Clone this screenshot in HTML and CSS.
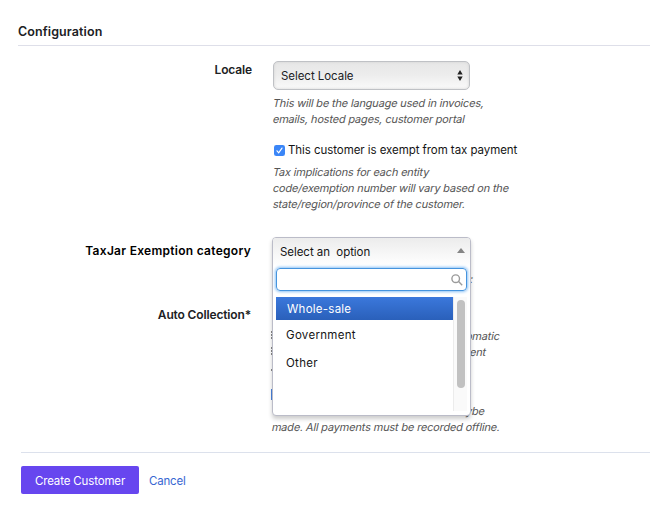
FILE: index.html
```html
<!DOCTYPE html>
<html lang="en">
<head>
<meta charset="utf-8">
<title>Configuration</title>
<link rel="stylesheet" href="styles.css">
</head>
<body>
<form class="config">
  <h2 class="heading">Configuration</h2>
  <div class="row row-locale">
    <label class="label">Locale</label>
    <div class="field">
      <div class="select"><span>Select Locale</span>
        <svg class="sort" viewBox="0 0 6 11"><path d="M3 0L5.7 4.5H.3zM3 11L.3 6.5H5.7z"/></svg>
      </div>
      <p class="hint hint-locale"><span>This will be the language used in invoices,</span><span>emails, hosted pages, customer portal</span></p>
    </div>
  </div>
  <div class="row row-exempt">
    <span class="label"></span>
    <div class="field">
      <div class="check">
        <svg class="tick" viewBox="0 0 11 11"><rect width="11" height="11" rx="2.3" fill="#3b86f7"/><path d="M3 5.8L4.7 7.8L8 3.1" fill="none" stroke="#fff" stroke-width="1.2" stroke-linecap="round"/></svg>
        <span>This customer is exempt from tax payment</span>
      </div>
      <p class="hint hint-exempt"><span>Tax implications for each entity</span><span>code/exemption number will vary based on the</span><span>state/region/province of the customer.</span></p>
    </div>
  </div>
  <div class="row row-category">
    <label class="label label-category">TaxJar Exemption category</label>
    <div class="field">
      <p class="hint peek-category"><span>:</span></p>
      <div class="dropdown">
        <div class="chosen"><span>Select an&nbsp; option</span><svg class="up" viewBox="0 0 8 5"><path d="M4 0L8 5H0z"/></svg></div>
        <div class="search"><svg class="glass" viewBox="0 0 12 12"><circle cx="4.7" cy="4.7" r="3.8"/><path d="M7.6 7.6L11.2 11.2"/></svg></div>
        <div class="list">
          <ul class="options">
            <li class="option active">Whole-sale</li>
            <li class="option">Government</li>
            <li class="option">Other</li>
          </ul>
          <div class="track"><div class="thumb"></div></div>
        </div>
      </div>
    </div>
  </div>
  <div class="row row-collection">
    <label class="label label-collection">Auto Collection*</label>
    <div class="field">
      <div class="edge"><i class="mark"></i><i class="mark"></i><i class="mark dot"></i><i class="mark radio"></i></div>
      <p class="hint peek peek-one"><span>omatic</span></p>
      <p class="hint peek peek-two"><span>ent</span></p>
      <p class="hint peek peek-three"><span>ybe</span></p>
      <p class="hint hint-offline"><span>made. All payments must be recorded offline.</span></p>
    </div>
  </div>
  <div class="actions">
    <button type="button" class="create">Create Customer</button>
    <a class="cancel">Cancel</a>
  </div>
</form>
</body>
</html>
```
FILE: styles.css
```css
* { box-sizing: border-box; }
body { margin: 0; background: #fff; color: #202124; font-family: Inter, "Liberation Sans", sans-serif; font-size: 11.5px; }
.config { width: 650px; height: 518px; overflow: hidden; }
.heading { margin: 0 0 0 18px; height: 46px; padding-top: 24px; border-bottom: 1px solid #dedfe9; font-size: 12.5px; line-height: 16px; font-weight: 600; letter-spacing: .1px; }
.row { display: grid; grid-template-columns: 252px 1fr; column-gap: 21px; }
.row-locale { height: 94px; padding-top: 15px; }
.row-exempt { height: 96px; padding-top: 2px; }
.row-category { height: 64px; }
.row-collection { height: 152px; }
.label { text-align: right; font-size: 12px; font-weight: 600; line-height: 16px; letter-spacing: -.15px; }
.row-locale .label { margin-top: 1px; }
.label-category { padding: 7px 1px 0 0; color: #000; letter-spacing: .28px; }
.label-collection { padding: 7px 1px 0 0; }
.field { position: relative; min-width: 0; }
.select { display: flex; align-items: center; justify-content: space-between; width: 197px; height: 29px; padding: 0 6px 0 7px; border: 1px solid #bfc1c5; border-radius: 5px; background: linear-gradient(#e7e7e7, #ececec 45%, #fafafa); box-shadow: inset 0 0 3px #d2d2d2; line-height: 16px; letter-spacing: -.05px; }
.sort { width: 6px; height: 11px; fill: #222; }
.hint { margin: 0; color: #555; font-size: 11px; line-height: 16px; letter-spacing: -.18px; white-space: nowrap; }
.hint span { display: block; width: max-content; transform: skewX(-12deg); }
.hint-locale { margin-top: 5px; }
.check { display: flex; align-items: center; gap: 3px; height: 16px; padding-left: 1px; color: #151515; white-space: nowrap; letter-spacing: -.06px; }
.check span { margin-top: -1px; }
.tick { width: 11px; height: 11px; }
.hint-exempt { margin-top: 6px; }
.peek-category { padding: 35px 0 0 197px; }
.dropdown { position: absolute; z-index: 2; top: 1px; left: -1px; width: 199px; height: 179px; border: 1px solid #bbbcc8; border-radius: 4px; background: #fff; box-shadow: 0 3px 4px rgba(0,0,0,.2); overflow: hidden; color: #151515; }
.chosen { display: flex; align-items: center; justify-content: space-between; height: 28px; padding: 0 5px 0 7px; background: linear-gradient(#ececec, #fff); letter-spacing: -.05px; }
.up { width: 8px; height: 5px; margin-bottom: 3px; fill: #858585; }
.search { display: flex; align-items: center; justify-content: flex-end; width: 191px; height: 23px; margin: 2px 0 0 3px; padding-right: 3px; border: 1.5px solid #4594de; border-radius: 4px; box-shadow: 0 0 3px 1px #8cc2f5; }
.glass { width: 12px; height: 12px; fill: none; stroke: #9b9b9b; stroke-width: 1.4; }
.list { display: flex; height: 114px; margin: 6px 0 0 3px; }
.options { width: 177px; margin: 0; padding: 0; list-style: none; }
.option { height: 28px; padding-left: 10px; line-height: 28px; letter-spacing: .3px; }
.active { height: 23px; margin-bottom: 1px; padding-left: 11px; background: linear-gradient(#3b78dc, #2a60ba); color: #fff; line-height: 24px; letter-spacing: .25px; }
.track { width: 14px; padding: 3px 3px 0; border-left: 1px solid #ececec; background: #fafafa; }
.thumb { width: 8px; height: 88px; border-radius: 4px; background: #c1c1c1; }
.edge { position: absolute; top: 31px; left: -2px; width: 1px; }
.mark { display: block; width: 1px; height: 8px; margin-bottom: 8px; background: linear-gradient(#888 2px, #fff 2px 3px, #888 3px 5px, #fff 5px 6px, #888 6px); }
.dot { height: 2px; margin-top: 14px; background: #888; }
.radio { height: 11px; margin-top: 18px; background: #4a83df; }
.peek { padding-left: 193px; }
.peek-one { padding-top: 28px; }
.peek-two { padding-left: 197px; }
.peek-three { padding: 43px 0 0 193px; }
.hint-offline { margin-left: -1px; }
.actions { display: flex; align-items: center; gap: 10px; height: 56px; margin-left: 21px; padding-bottom: 1px; border-top: 1px solid #dce1ec; letter-spacing: -.2px; }
.create { width: 118px; height: 28px; padding: 1px 0 0; border: 0; border-radius: 2px; background: #6746ef; color: #fff; font: 11.5px/16px Inter, "Liberation Sans", sans-serif; letter-spacing: -.14px; }
.cancel { padding-top: 1px; color: #3867d2; line-height: 16px; }
```
